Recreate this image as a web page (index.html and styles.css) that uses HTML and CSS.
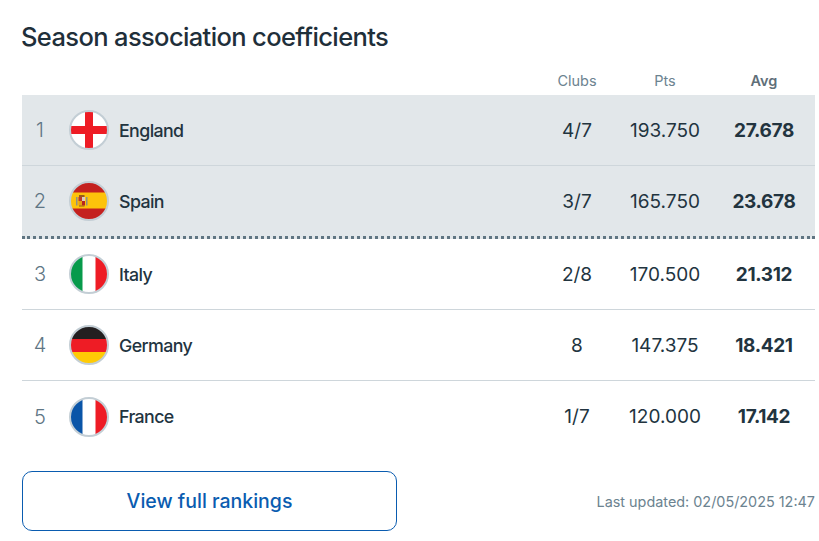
FILE: index.html
```html
<!DOCTYPE html>
<html lang="en">
<head>
<meta charset="utf-8">
<title>Season association coefficients</title>
<link rel="stylesheet" href="styles.css">
</head>
<body>
<main class="panel">
  <h1 class="title">Season association coefficients</h1>
  <div class="head">
    <span class="col">Clubs</span>
    <span class="col">Pts</span>
    <span class="col avg">Avg</span>
  </div>
  <div class="row hl">
    <span class="rank">1</span>
    <span class="country">
      <svg class="flag" viewBox="0 0 40 40"><defs><clipPath id="c1"><circle cx="20" cy="20" r="19"/></clipPath></defs><g clip-path="url(#c1)"><rect width="40" height="40" fill="#fff"/><rect x="16" width="8" height="40" fill="#ee1c25"/><rect y="16" width="40" height="8" fill="#ee1c25"/></g><circle cx="20" cy="20" r="19" fill="none" stroke="#c3ced5" stroke-width="2"/></svg>
      England
    </span>
    <span class="num">4/7</span><span class="num">193.750</span><span class="num strong">27.678</span>
  </div>
  <div class="row hl last-hl">
    <span class="rank">2</span>
    <span class="country">
      <svg class="flag" viewBox="0 0 40 40"><defs><clipPath id="c2"><circle cx="20" cy="20" r="19"/></clipPath></defs><g clip-path="url(#c2)"><rect width="40" height="40" fill="#c4211f"/><rect y="11.500" width="40" height="16" fill="#fdc30b"/><rect x="10" y="14" width="5.500" height="2" fill="#9a5a1a"/><rect x="9.500" y="16" width="3.500" height="4" fill="#c0392b"/><rect x="13" y="16" width="3" height="4" fill="#d9cfc0"/><rect x="9.500" y="20" width="3.500" height="4.500" fill="#e8a010"/><rect x="13" y="20" width="3" height="4.500" fill="#b8261f"/><rect x="7" y="16" width="1.500" height="8.500" fill="#8f8f86"/><rect x="17" y="16" width="1.500" height="8.500" fill="#8f8f86"/><rect x="10" y="24.500" width="5.500" height="1" fill="#9a5a1a"/></g><circle cx="20" cy="20" r="19" fill="none" stroke="#c3ced5" stroke-width="2"/></svg>
      Spain
    </span>
    <span class="num">3/7</span><span class="num">165.750</span><span class="num strong">23.678</span>
  </div>
  <div class="row">
    <span class="rank">3</span>
    <span class="country">
      <svg class="flag" viewBox="0 0 40 40"><defs><clipPath id="c3"><circle cx="20" cy="20" r="19"/></clipPath></defs><g clip-path="url(#c3)"><rect width="40" height="40" fill="#fff"/><rect width="13.500" height="40" fill="#079a4b"/><rect x="26.500" width="13.500" height="40" fill="#ee1c25"/></g><circle cx="20" cy="20" r="19" fill="none" stroke="#c3ced5" stroke-width="2"/></svg>
      Italy
    </span>
    <span class="num">2/8</span><span class="num">170.500</span><span class="num strong">21.312</span>
  </div>
  <div class="row">
    <span class="rank">4</span>
    <span class="country">
      <svg class="flag" viewBox="0 0 40 40"><defs><clipPath id="c4"><circle cx="20" cy="20" r="19"/></clipPath></defs><g clip-path="url(#c4)"><rect width="40" height="14" fill="#231f20"/><rect y="14" width="40" height="13" fill="#ee1c25"/><rect y="27" width="40" height="13" fill="#ffcb05"/></g><circle cx="20" cy="20" r="19" fill="none" stroke="#c3ced5" stroke-width="2"/></svg>
      Germany
    </span>
    <span class="num">8</span><span class="num">147.375</span><span class="num strong">18.421</span>
  </div>
  <div class="row end">
    <span class="rank">5</span>
    <span class="country">
      <svg class="flag" viewBox="0 0 40 40"><defs><clipPath id="c5"><circle cx="20" cy="20" r="19"/></clipPath></defs><g clip-path="url(#c5)"><rect width="40" height="40" fill="#fff"/><rect width="13.500" height="40" fill="#0a55a8"/><rect x="26.500" width="13.500" height="40" fill="#ee1c25"/></g><circle cx="20" cy="20" r="19" fill="none" stroke="#c3ced5" stroke-width="2"/></svg>
      France
    </span>
    <span class="num">1/7</span><span class="num">120.000</span><span class="num strong">17.142</span>
  </div>
  <div class="foot">
    <a class="btn" href="#">View full rankings</a>
    <span class="updated">Last updated: 02/05/2025 12:47</span>
  </div>
</main>
</body>
</html>
```
FILE: styles.css
```css
* { box-sizing: border-box; }
html, body { margin: 0; background: #fff; }
body { font-family: Inter, "Liberation Sans", sans-serif; color: #22343f; }
.panel { width: 819px; padding: 0 4px 0 22px; }
.title { margin: 0 0 0 -1px; height: 70px; padding-top: 20px; font-size: 25.500px; line-height: 34px; font-weight: 500; letter-spacing: -0.63px; color: #1f2f3a; }
.head, .row { display: grid; grid-template-columns: 36px 1fr 88px 88px 106px; align-items: center; }
.head { height: 25px; padding-bottom: 5px; font-size: 14.500px; color: #6c8390; }
.head .col:nth-child(1) { grid-column: 3; }
.col { text-align: center; }
.col.avg { padding-left: 4px; font-weight: 600; color: #5f6f79; }
.row { height: 71px; border-bottom: 1px solid #ced6db; }
.row.hl { background: #e2e7ea; }
.row.last-hl { height: 73px; border-bottom: 3px dotted #5f7582; }
.row.end { border-bottom: 0; }
.rank { text-align: center; font-size: 20px; font-weight: 300; color: #5f7685; }
.country { display: flex; align-items: center; gap: 10px; padding-left: 11px; font-size: 17.800px; font-weight: 500; letter-spacing: -0.6px; }
.flag { width: 40px; height: 40px; flex: none; }
.num { text-align: center; font-size: 19px; color: #22343f; }
.num.strong { padding-left: 4px; font-weight: 700; letter-spacing: -0.35px; }
.foot { display: flex; align-items: center; justify-content: space-between; margin-top: 19px; }
.btn { display: flex; align-items: center; justify-content: center; width: 375px; height: 60px; border: 1px solid #0a5cb0; border-radius: 10px; color: #0a5cb0; font-size: 19.500px; font-weight: 500; text-decoration: none; }
.updated { font-size: 14.400px; color: #6c8390; }
```
